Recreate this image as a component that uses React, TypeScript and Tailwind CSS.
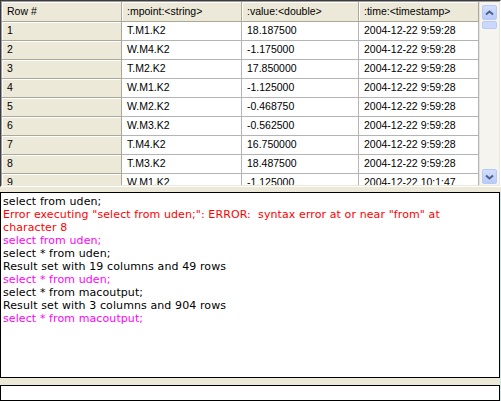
const rows: [string, string, string, string][] = [
  ["1", "T.M1.K2", "18.187500", "2004-12-22 9:59:28"],
  ["2", "W.M4.K2", "-1.175000", "2004-12-22 9:59:28"],
  ["3", "T.M2.K2", "17.850000", "2004-12-22 9:59:28"],
  ["4", "W.M1.K2", "-1.125000", "2004-12-22 9:59:28"],
  ["5", "W.M2.K2", "-0.468750", "2004-12-22 9:59:28"],
  ["6", "W.M3.K2", "-0.562500", "2004-12-22 9:59:28"],
  ["7", "T.M4.K2", "16.750000", "2004-12-22 9:59:28"],
  ["8", "T.M3.K2", "18.487500", "2004-12-22 9:59:28"],
  ["9", "W.M1.K2", "-1.125000", "2004-12-22 10:1:47"],
]

const headers = ["Row #", ":mpoint:<string>", ":value:<double>", ":time:<timestamp>"]

type Line = { text: string; color: string }

const log: Line[] = [
  { text: "select from uden;", color: "text-black" },
  { text: 'Error executing "select from uden;": ERROR:  syntax error at or near "from" at', color: "text-[#ff0000]" },
  { text: "character 8", color: "text-[#ff0000]" },
  { text: "select from uden;", color: "text-[#ff00ff]" },
  { text: "select * from uden;", color: "text-black" },
  { text: "Result set with 19 columns and 49 rows", color: "text-black" },
  { text: "select * from uden;", color: "text-[#ff00ff]" },
  { text: "select * from macoutput;", color: "text-black" },
  { text: "Result set with 3 columns and 904 rows", color: "text-black" },
  { text: "select * from macoutput;", color: "text-[#ff00ff]" },
]

function ScrollButton({ down }: { down?: boolean }) {
  return (
    <div className="flex h-[15px] w-[15px] items-center justify-center rounded-[2px] border border-[#b7c9f5] bg-gradient-to-b from-[#d2defd] to-[#b9cbfa]">
      <svg width="9" height="6" viewBox="0 0 9 6">
        <polyline
          points={down ? "1,1.5 4.5,4.5 8,1.5" : "1,4.5 4.5,1.5 8,4.5"}
          fill="none"
          stroke="#4d6185"
          strokeWidth="2"
        />
      </svg>
    </div>
  )
}

export default function App() {
  return (
    <div className="flex h-[401px] w-[501px] flex-col overflow-hidden bg-[#ece9d8]">
      {/* result grid */}
      <div className="h-[187px] shrink-0 border-t border-l border-b border-r border-t-[#3c3c3c] border-l-[#3c3c3c] border-b-white border-r-white">
        <div className="flex h-full border border-t-[#9d9d9d] border-l-[#9d9d9d] border-b-[#ece9d8] border-r-[#ece9d8] bg-white">
          <div
            className="h-full w-[477px] overflow-hidden text-[10.5px] text-black"
            style={{ fontFamily: '"Liberation Sans", Arial, sans-serif' }}
          >
            <div className="grid grid-cols-[120px_120px_117px_120px]">
              {headers.map((h) => (
                <div
                  key={h}
                  className="flex h-[20px] items-center whitespace-nowrap border-b border-r border-[#aca899] bg-[#ece9d8] pl-[5px] shadow-[inset_1px_1px_0_#ffffff]"
                >
                  {h}
                </div>
              ))}
              {rows.map((r) =>
                r.map((c, i) => (
                  <div
                    key={r[0] + "-" + i}
                    className={
                      i === 0
                        ? "flex h-[19px] items-center whitespace-nowrap border-b border-r border-[#aca899] bg-[#ece9d8] pl-[5px] shadow-[inset_1px_1px_0_#ffffff]"
                        : "flex h-[19px] items-center whitespace-nowrap border-b border-r border-[#b4b4b4] bg-white pl-[5px]"
                    }
                  >
                    {c}
                  </div>
                ))
              )}
            </div>
          </div>
          {/* vertical scrollbar */}
          <div className="flex h-full w-[20px] flex-col justify-between border-l border-[#e6e4da] bg-[#f5f4ee] pl-[2px] pt-[3px] pb-[1px]">
            <div className="flex flex-col gap-[1px]">
              <ScrollButton />
              <div className="h-[8px] w-[15px] rounded-[2px] border border-[#b7c9f5] bg-[#c9d8fc]" />
            </div>
            <ScrollButton down />
          </div>
        </div>
      </div>

      {/* console + input */}
      <div className="mt-[5px] flex flex-1">
        <div className="flex w-[500px] flex-col">
          <div
            className="h-[186px] border border-black bg-white px-[2px] pt-[2px] text-[11px] leading-[13px] tracking-[0.1px]"
            style={{ fontFamily: '"DejaVu Sans", Verdana, sans-serif' }}
          >
            {log.map((l, i) => (
              <div key={i} className={"whitespace-pre " + l.color}>
                {l.text}
              </div>
            ))}
          </div>
          <div className="mt-[7px] h-[16px] border border-black bg-white" />
        </div>
        <div className="w-[1px] bg-[#cfe8ec]" />
      </div>
    </div>
  )
}
